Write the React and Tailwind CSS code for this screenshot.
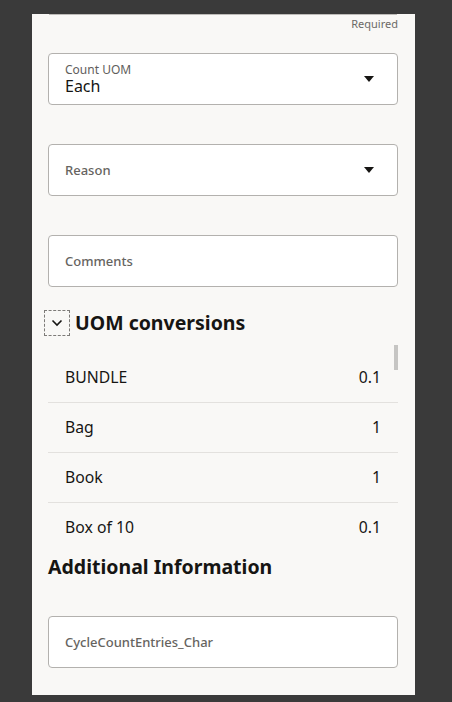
import React from "react";

const font = { fontFamily: '"Noto Sans", "Open Sans", Arial, sans-serif' };

function Caret() {
  return (
    <svg width="10" height="6" viewBox="0 0 10 6" className="shrink-0">
      <path d="M0 0 L10 0 L5 6 Z" fill="#161513" />
    </svg>
  );
}

function SelectBox({ label, value }) {
  return (
    <div className="h-[52px] rounded-[4px] border border-[#b3b1ae] bg-white flex items-center pl-4 pr-[23px]">
      <div className="flex-1 flex flex-col">
        {value ? (
          <>
            <span className="text-[12px] leading-[14px] text-[#5f5e5c]">{label}</span>
            <span className="text-[16px] leading-[18px] text-[#161513]">{value}</span>
          </>
        ) : (
          <span className="text-[13px] leading-[18px] font-medium text-[#66645f]">{label}</span>
        )}
      </div>
      <Caret />
    </div>
  );
}

function TextBox({ label }) {
  return (
    <div className="h-[52px] rounded-[4px] border border-[#b3b1ae] bg-white flex items-center pl-4">
      <span className="text-[13px] leading-[18px] font-medium text-[#66645f]">{label}</span>
    </div>
  );
}

const rows = [
  ["BUNDLE", "0.1"],
  ["Bag", "1"],
  ["Book", "1"],
  ["Box of 10", "0.1"],
];

export default function App() {
  return (
    <div className="h-[702px] w-[452px] bg-[#3a3a3a] pt-[14px] overflow-hidden" style={font}>
      <div className="ml-[32px] w-[383px] h-[681px] bg-[#f9f8f6] pl-4 pr-[17px] flex flex-col overflow-hidden">
        <div className="h-[1px] mx-[1px] bg-[#bdbbb8]" />
        <div className="h-[18px] leading-[18px] text-[11px] text-right text-[#6b6a67]">Required</div>

        <div className="mt-[20px]">
          <SelectBox label="Count UOM" value="Each" />
        </div>
        <div className="mt-[39px]">
          <SelectBox label="Reason" />
        </div>
        <div className="mt-[39px]">
          <TextBox label="Comments" />
        </div>

        <div className="mt-[23px] -ml-[4px] flex items-center">
          <div className="w-[26px] h-[26px] border border-dashed border-[#7d7b78] flex items-center justify-center">
            <svg width="12" height="8" viewBox="0 0 12 8">
              <path d="M1.5 1.5 L6 6 L10.5 1.5" fill="none" stroke="#161513" strokeWidth="1.6" />
            </svg>
          </div>
          <span className="ml-[5px] text-[19.5px] leading-[24px] font-bold text-[#161513]">UOM conversions</span>
        </div>

        <div className="mt-[9px] h-[200px] overflow-hidden relative pt-2">
          {rows.map(([name, val], i) => (
            <div
              key={name}
              className={
                i < rows.length - 1
                  ? "h-[50px] border-b border-[#e3e1de] flex items-center justify-between px-[17px] text-[15.75px] text-[#161513]"
                  : "h-[50px] flex items-center justify-between px-[17px] text-[15.75px] text-[#161513]"
              }
            >
              <span>{name}</span>
              <span>{val}</span>
            </div>
          ))}
          <div className="absolute right-0 top-0 w-[4px] h-[25px] bg-[#c6c5c3]" />
        </div>

        <div className="mt-[10px] text-[19.5px] leading-[24px] font-bold text-[#161513]">Additional Information</div>

        <div className="mt-[37px]">
          <TextBox label="CycleCountEntries_Char" />
        </div>
      </div>
    </div>
  );
}
